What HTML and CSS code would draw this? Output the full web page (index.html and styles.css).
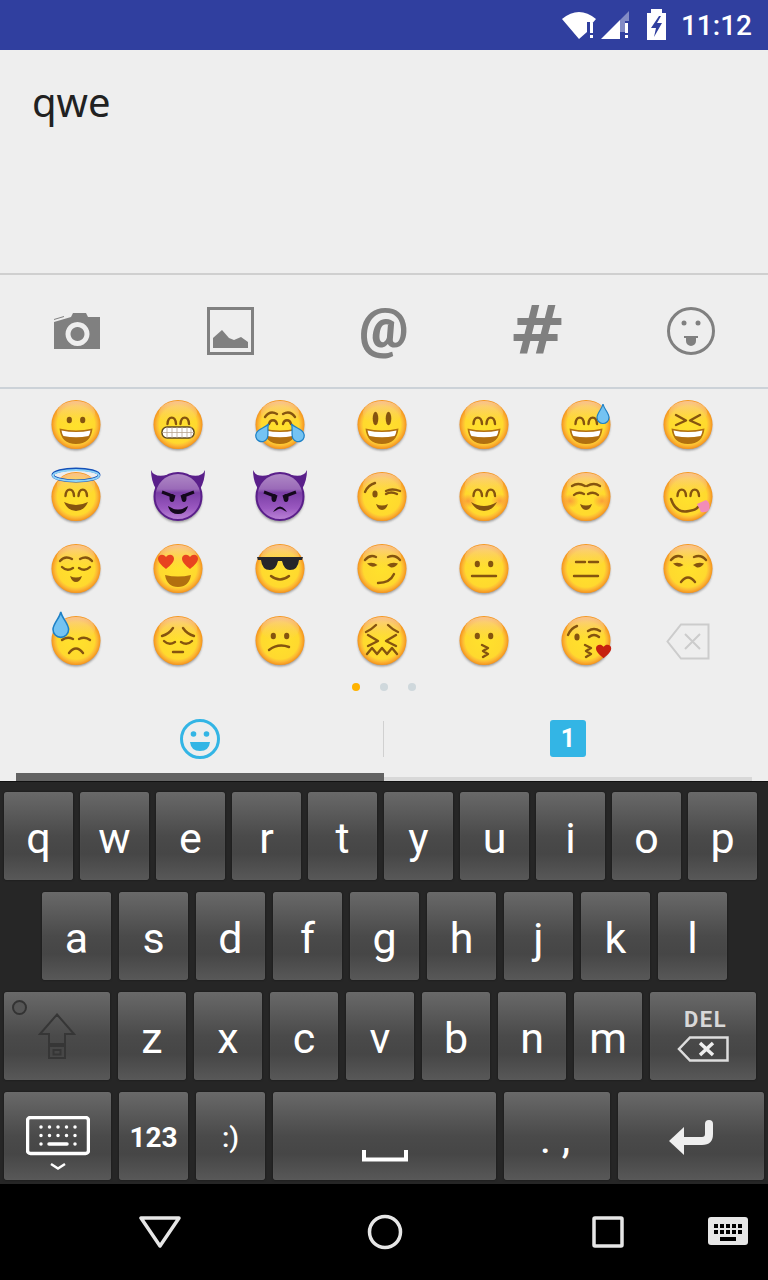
FILE: index.html
```html
<!DOCTYPE html>
<html lang="en">
  <head>
    <meta charset="UTF-8" />
    <meta name="viewport" content="width=device-width, initial-scale=1.0" />
    <title>Emoji keyboard</title>
    <link rel="stylesheet" href="styles.css">
  </head>
  <body>
    <!-- shared emoji parts -->
    <svg class="defs" width="0" height="0">
      <defs>
        <radialGradient id="skin">
          <stop offset="0" stop-color="#ffe22c" />
          <stop offset="0.76" stop-color="#ffd92e" />
          <stop offset="0.87" stop-color="#fcb934" />
          <stop offset="1" stop-color="#f4921c" />
        </radialGradient>
        <linearGradient id="gloss" x1="0" y1="0" x2="0" y2="1">
          <stop offset="0" stop-color="#f9c8a0" stop-opacity="0.85" />
          <stop offset="1" stop-color="#fdd24a" stop-opacity="0" />
        </linearGradient>
        <linearGradient id="grape" x1="0" y1="0" x2="0" y2="1">
          <stop offset="0" stop-color="#b08ac6" />
          <stop offset="0.34" stop-color="#9a6ab8" />
          <stop offset="0.42" stop-color="#7b3fa6" />
          <stop offset="0.75" stop-color="#9a58c0" />
          <stop offset="1" stop-color="#bb85d6" />
        </linearGradient>
        <radialGradient id="cheek">
          <stop offset="0" stop-color="#f98a3c" stop-opacity="0.75" />
          <stop offset="1" stop-color="#f98a3c" stop-opacity="0" />
        </radialGradient>
        <g id="face">
          <ellipse class="shade" cx="26" cy="27.500" rx="24" ry="24" />
          <circle class="skin" cx="26" cy="25.500" r="24.500" />
          <ellipse class="gloss" cx="26" cy="14" rx="19" ry="12" />
        </g>
        <g id="imp">
          <ellipse class="shade" cx="26" cy="27.500" rx="24" ry="24" />
          <path class="horn" d="M-1 -1Q2 7 15 4L4 18Q-1 10 -1 -1Z" />
          <path class="horn" d="M53 -1Q50 7 37 4L48 18Q53 10 53 -1Z" />
          <circle class="imp" cx="26" cy="25.500" r="23.500" />
          <path class="imp-brow" d="M10 21L23 26M42 21L29 26" />
          <ellipse class="imp-eye" cx="20" cy="27" rx="2.500" ry="4" />
          <ellipse class="imp-eye" cx="32" cy="27" rx="2.500" ry="4" />
        </g>
        <g id="laugh">
          <path class="mouth" d="M9.500 29.500Q26 33.500 42.500 29.500Q41 45 26 45Q11 45 9.500 29.500Z" />
          <path class="teeth" d="M11.500 31.500Q26 34.500 40.500 31.500Q40 35 38.500 37Q26 39.500 13.500 37Q12 35 11.500 31.500Z" />
        </g>
        <g id="arcs">
          <path class="line" d="M15.500 25C16 16.500 23.500 16.500 24 25" />
          <path class="line" d="M28.500 25C29 16.500 36.500 16.500 37 25" />
        </g>
        <g id="dots">
          <ellipse class="eye" cx="19.300" cy="21" rx="2.600" ry="3.300" />
          <ellipse class="eye" cx="32.700" cy="21" rx="2.600" ry="3.300" />
        </g>
        <path id="smile" class="eye" d="M14 31Q26 37 38 31Q34 40 26 40Q18 40 14 31Z" />
        <path id="small-smile" class="eye" d="M20 33Q26 36 32 33Q30 39 26 39Q22 39 20 33Z" />
        <g id="sly-eyes">
          <path class="line" d="M9 17Q14 11 20 14" />
          <path class="line" d="M32 14Q39 11 44 17" />
          <path class="eye" d="M11 20.500Q17 18.500 21.500 22Q17 25 13.500 22.500Z" />
          <path class="eye" d="M31 22Q36 18.500 42 20.500Q39 25 35 24.500Z" />
        </g>
        <path id="drop" class="tear" d="M6 0C7 5 12 9 12 13.500A6 6 0 0 1 0 13.500C0 9 5 5 6 0Z" />
        <path id="heart" d="M8 15C3 11 0 8 0 4.500C0 1 5 -1 8 3C11 -1 16 1 16 4.500C16 8 13 11 8 15Z" />
      </defs>
    </svg>

    <div class="status-bar">
      <svg class="status-icon" width="36" height="30" viewBox="0 0 36 30">
        <path class="white" d="M1 9Q18 -5 35 9L29 16V12H26V22L18 29Z" />
        <rect class="white" x="29" y="13" width="3" height="10" />
        <rect class="white" x="29" y="25" width="3" height="3" />
      </svg>
      <svg class="status-icon" width="30" height="30" viewBox="0 0 30 30">
        <path class="white" d="M1 29L20 10V29Z" />
        <path class="white dim" d="M20 10L29 1V11H25V22H20Z" />
        <rect class="white" x="25" y="13" width="3" height="10" />
        <rect class="white" x="25" y="25" width="3" height="3" />
      </svg>
      <svg class="status-icon battery" width="19" height="31" viewBox="0 0 19 31">
        <path class="white" d="M4 0H15V4H19V31H0V4H4Z" />
        <path class="bolt" d="M12 7L4 19H9L7 28L15 14H10L14 7Z" />
      </svg>
      <span class="clock">11:12</span>
    </div>

    <div class="input-area">qwe</div>

    <div class="toolbar">
      <div class="tool">
        <svg width="48" height="36" viewBox="0 0 48 36">
          <path class="tool-fill" d="M1 6L11 3V4L1 7Z" />
          <path class="tool-fill" fill-rule="evenodd" d="M1 9L18 4L20 0H33L35 4H47V36H1ZM24.500 9A12 12 0 1 0 24.510 9ZM24.500 14A7 7 0 1 1 24.490 14Z" />
        </svg>
      </div>
      <div class="tool">
        <svg width="47" height="48" viewBox="0 0 47 48">
          <rect class="tool-stroke" x="1.500" y="1.500" width="44" height="45" />
          <path class="tool-fill" d="M6 41V31L15 23L22 31L27 33L34 30L41 35V41Z" />
        </svg>
      </div>
      <div class="tool tool-at">@</div>
      <div class="tool tool-hash">#</div>
      <div class="tool">
        <svg width="48" height="48" viewBox="0 0 48 48">
          <circle class="tool-stroke thin" cx="24" cy="24" r="22.500" />
          <circle class="tool-dot" cx="17" cy="16" r="2.500" />
          <circle class="tool-dot" cx="31" cy="16" r="2.500" />
          <path class="tool-dot" d="M17 29H31V31H29V34A5 5 0 0 1 19 34V31H17Z" />
        </svg>
      </div>
    </div>

    <div class="emoji-grid">
      <!-- row 1 -->
      <div class="cell"><svg class="emoji" viewBox="0 0 52 54"><use href="#face" /><use href="#dots" /><use href="#laugh" /></svg></div>
      <div class="cell"><svg class="emoji" viewBox="0 0 52 54"><use href="#face" /><use href="#arcs" />
        <rect class="grin" x="10" y="28" width="32" height="11" rx="5" />
        <path class="grin-grid" d="M10 33.500H42M15 28V39M20 28V39M25 28V39M30 28V39M35 28V39M39 28V39" />
      </svg></div>
      <div class="cell"><svg class="emoji" viewBox="0 0 52 54"><use href="#face" />
        <path class="line" d="M11 18Q16 11 23 15M41 18Q36 11 29 15" />
        <path class="line" d="M15 25C16 20 22 20 23 25M29 25C30 20 36 20 37 25" />
        <use href="#laugh" />
        <use href="#drop" transform="translate(14.500 25) rotate(30) translate(-6 0)" />
        <use href="#drop" transform="translate(37.500 25) rotate(-30) translate(-6 0)" />
      </svg></div>
      <div class="cell"><svg class="emoji" viewBox="0 0 52 54"><use href="#face" />
        <ellipse class="eye" cx="19.500" cy="19.500" rx="2.800" ry="6.800" />
        <ellipse class="eye" cx="32.500" cy="19.500" rx="2.800" ry="6.800" />
        <use href="#laugh" />
      </svg></div>
      <div class="cell"><svg class="emoji" viewBox="0 0 52 54"><use href="#face" /><use href="#arcs" /><use href="#laugh" /></svg></div>
      <div class="cell"><svg class="emoji" viewBox="0 0 52 54"><use href="#face" /><use href="#arcs" /><use href="#laugh" /><use href="#drop" transform="translate(37 5)" /></svg></div>
      <div class="cell"><svg class="emoji" viewBox="0 0 52 54"><use href="#face" />
        <path class="line" d="M14 16L24 21.500L14 26M38 16L28 21.500L38 26" />
        <use href="#laugh" />
      </svg></div>

      <!-- row 2 -->
      <div class="cell"><svg class="emoji" viewBox="0 0 52 54"><use href="#face" /><use href="#arcs" /><use href="#smile" />
        <ellipse class="halo-rim" cx="26" cy="4" rx="23" ry="6" />
        <ellipse class="halo" cx="26" cy="4.500" rx="23" ry="5.500" />
      </svg></div>
      <div class="cell"><svg class="emoji" viewBox="0 0 52 54"><use href="#imp" />
        <path class="imp-mouth" d="M16 35Q26 42 36 35Q34 43 26 43Q18 43 16 35Z" />
      </svg></div>
      <div class="cell"><svg class="emoji" viewBox="0 0 52 54"><use href="#imp" />
        <path class="imp-mouth" d="M19 41Q26 30 33 41L30 39.500Q26 36 22 39.500Z" />
      </svg></div>
      <div class="cell"><svg class="emoji" viewBox="0 0 52 54"><use href="#face" />
        <path class="line" d="M9 21Q12 14 19 12" />
        <ellipse class="eye" cx="19" cy="23" rx="2.600" ry="3.600" />
        <path class="line" d="M30 20Q36 17 44 20M30 23Q35 20 41 23" />
        <use href="#small-smile" />
      </svg></div>
      <div class="cell"><svg class="emoji" viewBox="0 0 52 54"><use href="#face" />
        <ellipse fill="url(#cheek)" cx="10" cy="30" rx="9" ry="7" />
        <ellipse fill="url(#cheek)" cx="42" cy="30" rx="9" ry="7" />
        <use href="#arcs" />
        <path class="eye" d="M13 31Q26 39 39 31Q34 40 26 40Q18 40 13 31Z" />
      </svg></div>
      <div class="cell"><svg class="emoji" viewBox="0 0 52 54"><use href="#face" />
        <ellipse fill="url(#cheek)" cx="10" cy="30" rx="9" ry="7" />
        <ellipse fill="url(#cheek)" cx="42" cy="30" rx="9" ry="7" />
        <path class="line" d="M12 15Q18 11 25 15M27 15Q34 11 40 15" />
        <path class="line" d="M14 24Q18 20 24 23M28 23Q34 20 38 24" />
        <use href="#small-smile" />
      </svg></div>
      <div class="cell"><svg class="emoji" viewBox="0 0 52 54"><use href="#face" /><use href="#arcs" />
        <path class="line" d="M9 28Q14 43 27 40Q34 39 36 36" />
        <path class="tongue" d="M35 33L44 29Q49 32 47 39Q44 42 39 41Z" />
      </svg></div>

      <!-- row 3 -->
      <div class="cell"><svg class="emoji" viewBox="0 0 52 54"><use href="#face" />
        <path class="line" d="M10 18Q15 12 22 16M30 16Q37 12 42 18" />
        <path class="line" d="M12 24Q17 29 23 25M29 25Q35 29 40 24" />
        <use href="#small-smile" />
      </svg></div>
      <div class="cell"><svg class="emoji" viewBox="0 0 52 54"><use href="#face" />
        <path class="mouth" d="M13 32Q26 35 39 32Q37 44 26 44Q15 44 13 32Z" />
        <use class="love" href="#heart" transform="translate(6 11)" />
        <use class="love" href="#heart" transform="translate(30 11)" />
      </svg></div>
      <div class="cell"><svg class="emoji" viewBox="0 0 52 54"><use href="#face" />
        <path class="shades" d="M3 14H49L48 17H45Q44 27 36 27Q30 27 28 18H24Q22 27 16 27Q8 27 7 17H4Z" />
        <path class="line" d="M17 33Q26 40 35 33" />
      </svg></div>
      <div class="cell"><svg class="emoji" viewBox="0 0 52 54"><use href="#face" /><use href="#sly-eyes" />
        <path class="line" d="M22 40Q34 40 38 31" />
      </svg></div>
      <div class="cell"><svg class="emoji" viewBox="0 0 52 54"><use href="#face" /><use href="#dots" />
        <path class="line" d="M14 33H38" />
      </svg></div>
      <div class="cell"><svg class="emoji" viewBox="0 0 52 54"><use href="#face" />
        <path class="line" d="M16 19H25M29 19H38M14 33H38" />
      </svg></div>
      <div class="cell"><svg class="emoji" viewBox="0 0 52 54"><use href="#face" /><use href="#sly-eyes" />
        <path class="line" d="M19 39Q26 30 33 39" />
      </svg></div>

      <!-- row 4 -->
      <div class="cell"><svg class="emoji" viewBox="0 0 52 54"><use href="#face" />
        <path class="line" d="M12 25Q17 21 23 24M29 24Q35 21 40 25" />
        <path class="line" d="M19 38Q26 29 33 38" />
        <use href="#drop" transform="translate(3 -3) scale(1.300)" />
      </svg></div>
      <div class="cell"><svg class="emoji" viewBox="0 0 52 54"><use href="#face" />
        <path class="line" d="M10 21Q17 19 21 13M42 21Q35 19 31 13" />
        <path class="line" d="M12 26Q17 31 23 27M29 27Q35 31 40 26" />
        <path class="line" d="M21 37H31" />
      </svg></div>
      <div class="cell"><svg class="emoji" viewBox="0 0 52 54"><use href="#face" /><use href="#dots" />
        <path class="line" d="M15 35Q24 28 35 32" />
      </svg></div>
      <div class="cell"><svg class="emoji" viewBox="0 0 52 54"><use href="#face" />
        <path class="line" d="M10 17Q15 15 20 10M42 17Q37 15 32 10" />
        <path class="line" d="M12 20L22 26L12 31M40 20L30 26L40 31" />
        <path class="line" d="M11 39L16 33L21 39L26 33L31 39L36 33L41 39" />
      </svg></div>
      <div class="cell"><svg class="emoji" viewBox="0 0 52 54"><use href="#face" /><use href="#dots" />
        <path class="line" d="M24 30L30 33L25 36L30 39L25 42" />
      </svg></div>
      <div class="cell"><svg class="emoji" viewBox="0 0 52 54"><use href="#face" />
        <path class="line" d="M8 20Q11 13 17 11" />
        <ellipse class="eye" cx="17" cy="22" rx="2.600" ry="3.600" />
        <path class="line" d="M28 16Q34 12 40 16M29 22Q34 18 39 22" />
        <path class="line" d="M25 30L31 33L26 36L31 39L26 42" />
        <use class="kiss" href="#heart" transform="translate(36 29) scale(0.950)" />
      </svg></div>
      <div class="cell"><svg width="44" height="37" viewBox="0 0 44 37">
        <path class="erase" d="M15 1.500H42.500V35.500H15L1.500 18.500Z" />
        <path class="erase" d="M19 11L34 26M34 11L19 26" />
      </svg></div>
    </div>

    <div class="pager">
      <span class="dot active"></span>
      <span class="dot"></span>
      <span class="dot"></span>
    </div>

    <div class="tabs">
      <div class="tab selected">
        <svg width="40" height="40" viewBox="0 0 40 40">
          <circle class="tab-ring" cx="20" cy="20" r="18.500" />
          <circle class="tab-mark" cx="13.500" cy="15" r="2.800" />
          <circle class="tab-mark" cx="26.500" cy="15" r="2.800" />
          <path class="tab-mark" d="M10 23H30Q29 32 20 32Q11 32 10 23Z" />
        </svg>
      </div>
      <div class="tab">
        <span class="tile">1</span>
      </div>
    </div>

    <div class="keyboard">
      <div class="key-row row-top">
        <div class="key">q</div>
        <div class="key">w</div>
        <div class="key">e</div>
        <div class="key">r</div>
        <div class="key">t</div>
        <div class="key">y</div>
        <div class="key">u</div>
        <div class="key">i</div>
        <div class="key">o</div>
        <div class="key">p</div>
      </div>
      <div class="key-row row-home">
        <div class="key">a</div>
        <div class="key">s</div>
        <div class="key">d</div>
        <div class="key">f</div>
        <div class="key">g</div>
        <div class="key">h</div>
        <div class="key">j</div>
        <div class="key">k</div>
        <div class="key">l</div>
      </div>
      <div class="key-row row-shift">
        <div class="key wide shift">
          <span class="led"></span>
          <svg width="38" height="46" viewBox="0 0 38 46">
            <path class="shift-icon" d="M19 1.500L36 21H27V31H11V21H2Z" />
            <rect class="shift-icon" x="11" y="33" width="16" height="12" />
            <rect class="shift-icon" x="15.500" y="37" width="7" height="4.500" />
          </svg>
        </div>
        <div class="key">z</div>
        <div class="key">x</div>
        <div class="key">c</div>
        <div class="key">v</div>
        <div class="key">b</div>
        <div class="key">n</div>
        <div class="key">m</div>
        <div class="key wide del">
          <span class="del-label">DEL</span>
          <svg width="52" height="26" viewBox="0 0 52 26">
            <path class="del-icon" d="M13 1.500H50.500V24.500H13L2 13Z" />
            <path class="del-x" d="M23 7L36 19M36 7L23 19" />
          </svg>
        </div>
      </div>
      <div class="key-row row-bottom">
        <div class="key wide keyboard-key">
          <svg width="64" height="54" viewBox="0 0 64 54">
            <rect class="kb-outline" x="1.500" y="1.500" width="61" height="36" rx="3" />
            <path class="kb-dots" d="M15 11H50M15 19.500H50M15 28H15.100M49 28H49.100" />
            <path class="kb-bar" d="M23 28H41" />
            <path class="kb-chevron" d="M25 48L32 52.500L39 48" />
          </svg>
        </div>
        <div class="key small-text bold">123</div>
        <div class="key small-text medium">:)</div>
        <div class="key space">
          <svg width="46" height="12" viewBox="0 0 46 12">
            <path class="space-icon" d="M2 0V9.500H44V0" />
          </svg>
        </div>
        <div class="key punctuation">. ,</div>
        <div class="key enter">
          <svg width="46" height="38" viewBox="0 0 46 38">
            <path class="enter-line" d="M40 5V15Q40 22 33 22H12" />
            <path class="enter-head" d="M0 22L15 8V36Z" />
          </svg>
        </div>
      </div>
    </div>

    <div class="nav-bar">
      <svg class="nav-back" width="42" height="32" viewBox="0 0 42 32">
        <path class="nav-line" d="M2 2H40L21 30Z" />
      </svg>
      <svg class="nav-home" width="36" height="36" viewBox="0 0 36 36">
        <circle class="nav-line" cx="18" cy="18" r="15.500" />
      </svg>
      <svg class="nav-recent" width="32" height="32" viewBox="0 0 32 32">
        <rect class="nav-line" x="2" y="2" width="28" height="28" rx="1" />
      </svg>
      <svg class="nav-ime" width="40" height="28" viewBox="0 0 40 28">
        <rect class="ime-body" width="40" height="28" rx="3" />
        <path class="ime-keys" d="M6 7H10V11H6ZM12 7H16V11H12ZM18 7H22V11H18ZM24 7H28V11H24ZM30 7H34V11H30ZM6 13H10V17H6ZM12 13H16V17H12ZM18 13H22V17H18ZM24 13H28V17H24ZM30 13H34V17H30ZM12 20H28V24H12Z" />
      </svg>
    </div>
  </body>
</html>
```

FILE: styles.css
```css
html,
body {
  height: 100%;
}
body {
  margin: 0;
  width: 768px;
  height: 1280px;
  overflow: hidden;
  display: flex;
  flex-direction: column;
  background-color: #eeeeee;
  font-family: Roboto, sans-serif;
}
svg {
  display: block;
  flex: none;
}
.defs {
  height: 0;
}

/* status bar */
.status-bar {
  height: 50px;
  flex: none;
  box-sizing: border-box;
  padding-right: 16px;
  display: flex;
  justify-content: flex-end;
  align-items: center;
  background-color: #303f9f;
  color: white;
}
.status-icon {
  margin-right: 3px;
}
.status-icon.battery {
  margin: -1px 15px 0 14px;
}
.white {
  fill: white;
}
.white.dim {
  opacity: 0.4;
}
.bolt {
  fill: #303f9f;
}
.clock {
  font-size: 28px;
  font-weight: 500;
}

/* text field */
.input-area {
  height: 223px;
  flex: none;
  box-sizing: border-box;
  padding: 27px 0 0 32px;
  font-family: "Noto Sans", sans-serif;
  font-size: 40px;
  line-height: 50px;
  color: #212121;
}

/* attach toolbar */
.toolbar {
  height: 112px;
  flex: none;
  display: flex;
  border-top: 2px solid #cfcfcf;
  border-bottom: 2px solid #ccd2d8;
}
.tool {
  flex: 1;
  display: flex;
  justify-content: center;
  align-items: center;
  color: #808080;
  margin-top: -1px;
}
.tool-fill {
  fill: #808080;
}
.tool-stroke {
  fill: none;
  stroke: #808080;
  stroke-width: 3px;
}
.tool-dot {
  fill: #808080;
}
.tool-at {
  font-weight: 900;
  font-size: 55px;
  padding-bottom: 5px;
  box-sizing: border-box;
}
.tool-hash {
  font-family: "DejaVu Sans", sans-serif;
  font-weight: bold;
  font-size: 68px;
}

/* emoji page */
.emoji-grid {
  flex: none;
  padding-left: 25px;
  display: grid;
  grid-template-columns: repeat(7, 102px);
  grid-auto-rows: 72px;
}
.cell {
  display: flex;
  justify-content: center;
  align-items: center;
}
.emoji {
  width: 52px;
  height: 54px;
  overflow: visible;
  margin-top: 2px;
}
.shade {
  fill: #9a9a9a;
  filter: blur(1px);
}
.skin {
  fill: url(#skin);
}
.gloss {
  fill: url(#gloss);
}
.imp {
  fill: url(#grape);
  stroke: #5a1f8a;
  stroke-width: 2px;
}
.horn {
  fill: #5a1f8a;
}
.imp-eye,
.imp-mouth {
  fill: #14081c;
}
.imp-brow {
  fill: none;
  stroke: #14081c;
  stroke-width: 3px;
}
.mouth {
  fill: #b2700f;
}
.teeth {
  fill: white;
}
.eye {
  fill: #85540f;
}
.line {
  fill: none;
  stroke: #85540f;
  stroke-width: 2.400px;
  stroke-linecap: round;
  stroke-linejoin: round;
}
.grin {
  fill: white;
  stroke: #5f4a20;
  stroke-width: 1.500px;
}
.grin-grid {
  fill: none;
  stroke: #b9a58f;
  stroke-width: 0.800px;
}
.tear {
  fill: #74c3f2;
  stroke: #1d80c6;
  stroke-width: 1.200px;
}
.halo-rim {
  fill: none;
  stroke: #1450b8;
  stroke-width: 3px;
}
.halo {
  fill: none;
  stroke: #8fd4f8;
  stroke-width: 2px;
}
.tongue {
  fill: #f28cb8;
}
.love {
  fill: #e8431f;
}
.kiss {
  fill: #c6210f;
}
.shades {
  fill: #26262a;
}
.erase {
  fill: none;
  stroke: #cccccc;
  stroke-width: 2px;
}

/* pager dots */
.pager {
  height: 23px;
  flex: none;
  display: flex;
  justify-content: center;
  gap: 20px;
  padding-top: 6px;
  box-sizing: border-box;
}
.dot {
  width: 8px;
  height: 8px;
  border-radius: 50%;
  background-color: #cfd8dc;
}
.dot.active {
  background-color: #ffb300;
}

/* emoji / numbers tabs */
.tabs {
  height: 81px;
  flex: none;
  margin: 0 16px;
  display: flex;
}
.tab {
  flex: 1;
  height: 81px;
  box-sizing: border-box;
  padding-top: 4px;
  display: flex;
  justify-content: center;
  align-items: center;
  border-bottom: 4px solid #d8d8d8;
}
.tab.selected {
  padding-top: 4px;
  border-bottom: 8px solid #626262;
  position: relative;
  padding-bottom: 0;
}
.tab.selected::after {
  content: "";
  position: absolute;
  right: 0;
  top: 21px;
  height: 36px;
  border-right: 1px solid #d0d0d0;
}
.tab:not(.selected) {
  padding-bottom: 4px;
}
.tab-ring {
  fill: none;
  stroke: #33b5e5;
  stroke-width: 3px;
}
.tab-mark {
  fill: #33b5e5;
}
.tile {
  width: 36px;
  height: 37px;
  border-radius: 3px;
  background-color: #33b5e5;
  color: white;
  font-weight: bold;
  font-size: 25px;
  line-height: 37px;
  text-align: center;
}

/* keyboard */
.keyboard {
  height: 403px;
  flex: none;
  box-sizing: border-box;
  padding-top: 10px;
  border-top: 1px solid #111111;
  background-color: #262626;
  display: flex;
  flex-direction: column;
  gap: 12px;
}
.key-row {
  display: flex;
  height: 88px;
  gap: 8px;
}
.row-top {
  padding-left: 4px;
  gap: 7px;
}
.row-home {
  padding-left: 42px;
}
.row-shift,
.row-bottom {
  padding-left: 4px;
}
.key {
  width: 69px;
  height: 88px;
  box-sizing: border-box;
  padding-top: 4px;
  display: flex;
  flex-direction: column;
  justify-content: center;
  align-items: center;
  border-radius: 3px;
  background: linear-gradient(#696969, #4a4a4a 50%, #464646 70%, #585858);
  box-shadow: 0 0 2px #111111, inset 0 0 1px rgba(255, 255, 255, 0.15);
  color: white;
  font-size: 43px;
  font-weight: 400;
}
.row-shift .key {
  width: 68px;
}
.row-shift .key.wide {
  width: 106px;
}
.row-bottom .keyboard-key {
  width: 107px;
  padding-top: 14px;
}
.small-text {
  font-size: 28px;
  padding-top: 2px;
}
.bold {
  font-weight: bold;
}
.medium {
  font-weight: 500;
}
.row-bottom .space {
  width: 223px;
  padding-top: 40px;
}
.row-bottom .punctuation {
  width: 106px;
  padding-right: 4px;
}
.row-bottom .enter {
  width: 146px;
  padding: 4px 0 0 2px;
}

.row-shift .shift {
  position: relative;
  padding-top: 0;
}
.led {
  position: absolute;
  left: 8px;
  top: 8px;
  width: 11px;
  height: 11px;
  border-radius: 50%;
  background-color: #565656;
  border: 2px solid #333333;
}
.shift-icon {
  fill: none;
  stroke: #363636;
  stroke-width: 2px;
}
.row-shift .del {
  padding-top: 0;
  gap: 7px;
}
.del-label {
  font-size: 22px;
  line-height: 18px;
  font-weight: bold;
  letter-spacing: 1.500px;
  margin-left: 5px;
  color: #d8d8d8;
}
.del-icon {
  fill: none;
  stroke: #dddddd;
  stroke-width: 2.500px;
}
.del-x {
  fill: none;
  stroke: #eeeeee;
  stroke-width: 3.500px;
}
.kb-outline {
  fill: none;
  stroke: white;
  stroke-width: 3.500px;
}
.kb-dots {
  fill: none;
  stroke: white;
  stroke-width: 3.500px;
  stroke-linecap: round;
  stroke-dasharray: 0 8.500;
}
.kb-bar {
  fill: none;
  stroke: white;
  stroke-width: 3.500px;
  stroke-linecap: round;
}
.kb-chevron {
  fill: none;
  stroke: white;
  stroke-width: 2.500px;
}
.space-icon {
  fill: none;
  stroke: white;
  stroke-width: 4px;
}
.enter-line {
  fill: none;
  stroke: #eeeeee;
  stroke-width: 8px;
  stroke-linecap: round;
}
.enter-head {
  fill: #eeeeee;
}

/* navigation bar */
.nav-bar {
  height: 96px;
  flex: none;
  box-sizing: border-box;
  padding: 0 0 1px 139px;
  display: flex;
  align-items: center;
  background-color: black;
}
.nav-line {
  fill: none;
  stroke: #e6e6e6;
  stroke-width: 3.500px;
  stroke-linejoin: round;
}
.nav-home {
  margin-left: 186px;
}
.nav-recent {
  margin-left: 189px;
}
.nav-ime {
  margin: -2px 0 0 84px;
}
.ime-body {
  fill: #e6e6e6;
}
.ime-keys {
  fill: black;
}
```
